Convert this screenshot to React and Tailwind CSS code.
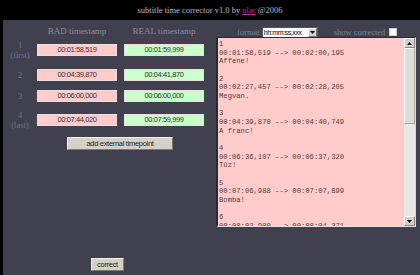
const serif = { fontFamily: '"Liberation Serif", "Times New Roman", serif' };

const rows = [
  { n: '1', sub: '(first)', bad: '00:01:58,519', real: '00:01:59,999' },
  { n: '2', bad: '00:04:39,870', real: '00:04:41,870' },
  { n: '3', bad: '00:06:00,000', real: '00:06:00,000' },
  { n: '4', sub: '(last)', bad: '00:07:44,020', real: '00:07:59,999' },
];

const subs = `1
00:01:58,519 --> 00:02:00,195
Affene!

2
00:02:27,457 --> 00:02:28,205
Megvan.

3
00:04:39,870 --> 00:04:40,749
A franc!

4
00:06:36,107 --> 00:06:37,320
Tűz!

5
00:07:06,988 --> 00:07:07,899
Bomba!

6
00:08:02,900 --> 00:08:04,271`;

function Stamp({ value, tone }) {
  return (
    <div
      className={`w-[80px] h-[12px] flex items-center justify-center border border-[#e9dede] text-[7.5px] tracking-[-0.4px] text-[#3a2e2e] font-['Liberation_Sans',Arial,sans-serif] ${
        tone === 'bad' ? 'bg-[#ffcccc]' : 'bg-[#ccffcc]'
      }`}
    >
      {value}
    </div>
  );
}

function Triangle({ down }) {
  return (
    <svg width="5" height="3" viewBox="0 0 5 3">
      {down ? <path d="M0 0h5L2.5 3z" fill="#111" /> : <path d="M0 3h5L2.5 0z" fill="#111" />}
    </svg>
  );
}

export default function App() {
  return (
    <div className="w-[420px] h-[275px] bg-black overflow-hidden" style={serif}>
      {/* title */}
      <div className="h-[20px] pt-[1px] flex items-center justify-center text-[8.5px] text-[#bdbcc4]">
        subtitle time corrector v1.0 by&nbsp;<span className="text-[#a23aa8] underline">olar</span>&nbsp;@2006
      </div>

      <div className="ml-[3px] h-[255px] bg-[#41404f] flex">
        {/* left: timepoints */}
        <div className="w-[213px] flex flex-col pt-[6px] pb-[4px]">
          <div className="flex h-[10px] leading-[10px] text-[9px] text-[#8e8da1]">
            <div className="w-[34px]" />
            <div className="w-[80px] text-center">BAD timestamp</div>
            <div className="w-[80px] ml-[7px] text-center">REAL timestamp</div>
          </div>

          <div className="mt-[4px] flex flex-col gap-[8px]">
            {rows.map((r) => (
              <div key={r.n} className={`flex items-center ${r.sub ? 'h-[20px]' : 'h-[13px]'}`}>
                <div className="w-[34px] text-center leading-[10px] text-[8.5px] text-[#747287]">
                  {r.n}
                  {r.sub && <div>{r.sub}</div>}
                </div>
                <Stamp value={r.bad} tone="bad" />
                <div className="ml-[7px]">
                  <Stamp value={r.real} tone="good" />
                </div>
              </div>
            ))}
          </div>

          <button className="mt-[7px] ml-[64px] w-[106px] h-[13px] bg-[#d4d0c8] border border-t-[#f4f2ec] border-l-[#f4f2ec] border-r-[#7d7a74] border-b-[#7d7a74] text-[7.5px] tracking-[-0.3px] leading-none text-[#222] font-['Liberation_Sans',Arial,sans-serif]">
            add external timepoint
          </button>

          <button className="mt-auto ml-[88px] w-[33px] h-[13px] bg-[#d4d0c8] border border-t-[#f4f2ec] border-l-[#f4f2ec] border-r-[#7d7a74] border-b-[#7d7a74] text-[7.5px] tracking-[-0.3px] leading-none text-[#222] font-['Liberation_Sans',Arial,sans-serif]">
            correct
          </button>
        </div>

        {/* right: subtitle text */}
        <div className="w-[200px] flex flex-col pt-[7px]">
          <div className="h-[10px] flex items-center">
            <span className="ml-[21px] text-[8.5px] text-[#7f7e92]">format</span>
            <div className="ml-[2px] w-[56px] h-[11px] bg-white border border-[#555] flex items-center">
              <span className="flex-1 pl-[1px] text-[7px] tracking-[-0.4px] text-black font-['Liberation_Sans',Arial,sans-serif] leading-none">
                hh:mm:ss,xxx
              </span>
              <span className="w-[9px] h-[9px] bg-[#d4d0c8] border border-t-white border-l-white border-r-[#777] border-b-[#777] flex items-center justify-center">
                <Triangle down />
              </span>
            </div>
            <span className="ml-[16px] text-[8.5px] text-[#7f7e92]">show corrected</span>
            <span className="ml-[4px] w-[8px] h-[8px] bg-white border border-[#c8c8c8]" />
          </div>

          <div className="h-[190px] flex bg-[#ffcccc] border border-l-[2px] border-t-[#2a2a33] border-l-[#2a2a33] border-r-[#dcdad4] border-b-[#e6e4de] overflow-hidden">
            <div className="flex-1 overflow-hidden pt-[2px] pl-[1px] whitespace-pre text-[7.2px] leading-[8.65px] text-[#5e3636] font-['Liberation_Mono','Courier_New',monospace]">
              {subs}
            </div>
            <div className="w-[11px] bg-[#e9e7e1] flex flex-col">
              <div className="h-[10px] bg-[#d4d0c8] border border-t-white border-l-white border-r-[#8a8780] border-b-[#8a8780] flex items-center justify-center">
                <Triangle />
              </div>
              <div className="h-[76px] bg-[#dedcd6] border border-t-white border-l-white border-r-[#aaa79f] border-b-[#aaa79f]" />
              <div className="flex-1" />
              <div className="h-[10px] bg-[#d4d0c8] border border-t-white border-l-white border-r-[#8a8780] border-b-[#8a8780] flex items-center justify-center">
                <Triangle down />
              </div>
            </div>
          </div>
        </div>
      </div>
    </div>
  );
}
